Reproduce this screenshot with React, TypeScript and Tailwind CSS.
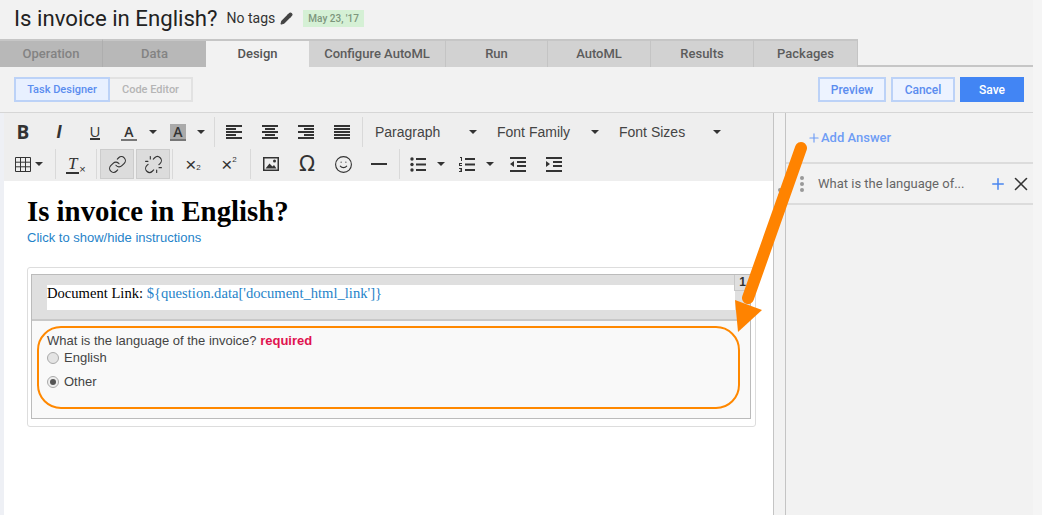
import { Link, Unlink, Smile, Pencil, Plus, X } from "lucide-react";
import type { ReactNode } from "react";

const tabs = [
  { label: "Operation", w: "w-[103px]", cls: "bg-[#b8b8b8] text-[#838383] border-r border-[#aeaeae]" },
  { label: "Data", w: "w-[103px]", cls: "bg-[#b8b8b8] text-[#838383]" },
  { label: "Design", w: "w-[103px]", cls: "bg-[#f2f2f2] text-[#555]" },
  { label: "Configure AutoML", w: "w-[137px]", cls: "bg-[#d2d2d2] text-[#5c5c5c] border-r border-[#c4c4c4]" },
  { label: "Run", w: "w-[102px]", cls: "bg-[#d2d2d2] text-[#5c5c5c] border-r border-[#c4c4c4]" },
  { label: "AutoML", w: "w-[103px]", cls: "bg-[#d2d2d2] text-[#5c5c5c] border-r border-[#c4c4c4]" },
  { label: "Results", w: "w-[103px]", cls: "bg-[#d2d2d2] text-[#5c5c5c] border-r border-[#c4c4c4]" },
  { label: "Packages", w: "w-[104px]", cls: "bg-[#d2d2d2] text-[#5c5c5c] border-r border-[#c4c4c4]" },
];

const Caret = () => (
  <span className="inline-block w-0 h-0 border-x-[4px] border-x-transparent border-t-[4px] border-t-[#333]" />
);

const Sep = () => <div className="w-px h-[30px] bg-[#d9d9d9] mx-[1px] shrink-0" />;

const Btn = ({ w = "w-[36px]", children, active }: { w?: string; children: ReactNode; active?: boolean }) => (
  <div className={`${w} h-[30px] shrink-0 flex items-center justify-center text-[#333] ${active ? "bg-[#dcdcdc] border border-[#ccc]" : ""}`}>
    {children}
  </div>
);

const Lines = ({ rows }: { rows: [number, number][] }) => (
  <svg width="16" height="15" viewBox="0 0 16 15" fill="#333">
    {rows.map(([x, w], i) => (
      <rect key={i} x={x} y={i * 3} width={w} height="2" />
    ))}
  </svg>
);

const Dropdown = ({ label }: { label: string }) => (
  <div className="w-[122px] h-[30px] flex items-center justify-between pr-[20px] text-[14px] text-[#444] shrink-0">
    <span>{label}</span>
    <Caret />
  </div>
);

const Dots = () => (
  <>
    <span className="w-[4px] h-[4px] rounded-full bg-[#999]" />
    <span className="w-[4px] h-[4px] rounded-full bg-[#999]" />
    <span className="w-[4px] h-[4px] rounded-full bg-[#999]" />
  </>
);

function Toolbar() {
  return (
    <div className="h-[68px] bg-[#eeeeee] pl-[1px] pt-[4px] font-['Liberation_Sans',sans-serif]">
      <div className="h-[30px] flex items-center">
        <Btn><b className="text-[19px] font-['Open_Sans',sans-serif] leading-none">B</b></Btn>
        <Btn><i className="text-[18px] font-['Liberation_Sans',sans-serif] leading-none font-bold">I</i></Btn>
        <Btn>
          <span className="text-[15px] leading-[14px] border-b-2 border-[#333] font-['Open_Sans',sans-serif]">U</span>
        </Btn>
        <Btn w="w-[32px]">
          <span className="text-[14px] font-['Open_Sans',sans-serif] leading-[15px] border-b-[2px] border-[#777] w-[16px] text-center font-semibold">A</span>
        </Btn>
        <Btn w="w-[15px]"><Caret /></Btn>
        <Btn>
          <span className="text-[14px] font-['Open_Sans',sans-serif] leading-[15px] bg-[#aaa] border-b-[2px] border-[#777] w-[16px] text-center font-semibold">A</span>
        </Btn>
        <Btn w="w-[10px]"><Caret /></Btn>
        <div className="w-[7px]" />
        <Sep />
        <Btn><Lines rows={[[0, 16], [0, 10], [0, 16], [0, 10], [0, 16]]} /></Btn>
        <Btn><Lines rows={[[0, 16], [3, 10], [0, 16], [3, 10], [0, 16]]} /></Btn>
        <Btn><Lines rows={[[0, 16], [6, 10], [0, 16], [6, 10], [0, 16]]} /></Btn>
        <Btn><Lines rows={[[0, 16], [0, 16], [0, 16], [0, 16], [0, 16]]} /></Btn>
        <div className="w-[1px]" />
        <Sep />
        <div className="w-[11px]" />
        <Dropdown label="Paragraph" />
        <Dropdown label="Font Family" />
        <Dropdown label="Font Sizes" />
      </div>
      <div className="h-[30px] mt-[2px] flex items-center">
        <div className="w-[10px]" />
        <svg width="16" height="15" viewBox="0 0 16 15" fill="none" stroke="#333">
          <path d="M.5.5h15v14H.5zM.5 5.2h15M.5 9.8h15M5.5.5v14M10.5.5v14" />
        </svg>
        <div className="w-[4px]" />
        <Caret />
        <div className="w-[11px]" />
        <Sep />
        <Btn w="w-[38px]">
          <span className="text-[17px] font-['Liberation_Serif',serif] italic leading-[17px] border-b-2 border-[#333] w-[13px] text-center">
            T
          </span>
          <span className="text-[11px] leading-none mt-[10px]">×</span>
        </Btn>
        <Sep />
        <div className="w-[2px]" />
        <Btn w="w-[34px]" active><Link size={19} strokeWidth={1.4} /></Btn>
        <div className="w-[2px]" />
        <Btn w="w-[34px]" active><Unlink size={19} strokeWidth={1.4} /></Btn>
        <div className="w-[1px]" />
        <Sep />
        <Btn w="w-[38px]">
          <span className="text-[19px] leading-none">×</span>
          <span className="text-[8px] mt-[8px] leading-none">2</span>
        </Btn>
        <Btn w="w-[34px]">
          <span className="text-[19px] leading-none">×</span>
          <span className="text-[8px] -mt-[8px] leading-none">2</span>
        </Btn>
        <div className="w-[3px]" />
        <Sep />
        <Btn w="w-[38px]">
          <svg width="16" height="14" viewBox="0 0 16 14">
            <path d="M0 0h16v14H0z" fill="#333" />
            <path d="M1.5 1.5h13v11h-13z" fill="#eee" />
            <path d="M2.5 11.5l4-5 3 3 1.5-1.5 2.5 3.5z" fill="#333" />
            <circle cx="11.5" cy="4" r="1.5" fill="#333" />
          </svg>
        </Btn>
        <Btn w="w-[34px]"><span className="text-[21px] leading-none font-['DejaVu_Sans',sans-serif]">Ω</span></Btn>
        <Btn w="w-[38px]"><Smile size={19} strokeWidth={1.4} /></Btn>
        <Btn w="w-[34px]"><div className="w-[16px] h-[2px] bg-[#333]" /></Btn>
        <div className="w-[2px]" />
        <Sep />
        <Btn w="w-[34px]">
          <svg width="16" height="15" viewBox="0 0 16 15" fill="#333">
            <circle cx="2" cy="2" r="1.7" /><circle cx="2" cy="7.5" r="1.7" /><circle cx="2" cy="13" r="1.7" />
            <path d="M6 1h10v2H6zM6 6.5h10v2H6zM6 12h10v2H6z" />
          </svg>
        </Btn>
        <Btn w="w-[12px]"><Caret /></Btn>
        <Btn w="w-[39px]">
          <svg width="16" height="15" viewBox="0 0 16 15" fill="#333">
            <path d="M1 0h2v4H2V1H1zM0 6h3v1H1v1h2v1H0v-1zM0 11h3v4H0v-1h2v-.5H1v-1h1V12H0z" />
            <path d="M6 1h10v2H6zM6 6.5h10v2H6zM6 12h10v2H6z" />
          </svg>
        </Btn>
        <Btn w="w-[8px]"><Caret /></Btn>
        <div className="w-[6px]" />
        <Btn>
          <svg width="16" height="15" viewBox="0 0 16 15" fill="#333">
            <path d="M0 0h16v2H0zM7 4h9v2H7zM7 8h9v2H7zM0 13h16v2H0zM4 4v6L0 7z" />
          </svg>
        </Btn>
        <Btn>
          <svg width="16" height="15" viewBox="0 0 16 15" fill="#333">
            <path d="M0 0h16v2H0zM7 4h9v2H7zM7 8h9v2H7zM0 13h16v2H0zM0 4v6l4-3z" />
          </svg>
        </Btn>
      </div>
    </div>
  );
}

export default function App() {
  return (
    <div className="relative w-[1042px] h-[515px] overflow-hidden bg-[#f5f5f5] font-['Roboto',sans-serif]">
      <div className="w-[1033px] h-full bg-[#f2f2f2]">
        {/* title */}
        <div className="h-[39px] pl-[14px] pb-[3px] flex items-center gap-[9px]">
          <h1 className="text-[22.2px] text-[#222] leading-none">Is invoice in English?</h1>
          <span className="text-[14px] text-[#333]">No tags</span>
          <Pencil size={13} fill="#444" stroke="#444" className="-ml-[4px]" />
          <span className="ml-[1px] h-[17px] px-[5px] flex items-center bg-[#d5f0d5] text-[#7d967d] text-[10px] font-medium">
            May 23, '17
          </span>
        </div>

        {/* tabs */}
        <div className="h-[28px] flex border-b-2 border-[#c6c6c6]">
          {tabs.map((t) => (
            <div
              key={t.label}
              className={`${t.w} h-[28px] flex items-center justify-center text-[13px] font-medium border-t-2 border-t-[#c6c6c6] ${t.cls}`}
            >
              {t.label}
            </div>
          ))}
        </div>

        {/* action row */}
        <div className="h-[45px] pl-[14px] pr-[9px] flex items-center justify-between">
          <div className="flex text-[11px] font-medium">
            <div className="w-[96px] h-[25px] pt-[1px] flex items-center justify-center bg-[#e8f0ff] border-2 border-[#bcd2f7] text-[#5b8def]">
              Task Designer
            </div>
            <div className="w-[83px] h-[25px] pt-[1px] flex items-center justify-center border-2 border-l-0 border-[#e2e2e2] text-[#b5b5b5]">
              Code Editor
            </div>
          </div>
          <div className="flex gap-[5px] text-[12px] font-medium">
            <div className="w-[68px] h-[25px] flex items-center justify-center bg-[#edf3ff] border-2 border-[#bcd2f7] text-[#5b8def]">
              Preview
            </div>
            <div className="w-[64px] h-[25px] flex items-center justify-center bg-[#edf3ff] border-2 border-[#bcd2f7] text-[#5b8def]">
              Cancel
            </div>
            <div className="w-[64px] h-[25px] flex items-center justify-center bg-[#4285f4] text-white">
              Save
            </div>
          </div>
        </div>

        {/* workspace */}
        <div className="h-[403px] flex border-t border-[#d6d6d6]">
          <div className="w-[4px] bg-[#eef0f5] shrink-0" />
          <div className="w-[769px] shrink-0 bg-white">
            <Toolbar />
            <div className="pl-[23px] pr-[17px] pt-[14px]">
              <h2 className="text-[28.8px] leading-[32px] font-bold text-black font-['Liberation_Serif',serif]">
                Is invoice in English?
              </h2>
              <a className="block mt-[1px] text-[13px] leading-[20px] text-[#1f83c9] font-['Liberation_Sans',sans-serif]">
                Click to show/hide instructions
              </a>
              <div className="mt-[19px] h-[160px] w-[729px] border border-[#dddddd] rounded-[3px] px-[3px] pt-[6px] pb-[6px]">
                <div className="h-[145px] w-[720px] border border-[#bbbbbb] flex flex-col">
                  <div className="relative h-[46px] bg-[#dfdfdf] border-b-2 border-[#c8c8c8] pl-[15px] pt-[10px]">
                    <div className="w-[688px] h-[25px] bg-white text-[14.6px] leading-[16px] font-['Liberation_Serif',serif] text-black">
                      Document Link: <span className="text-[#1f83c9]">{"${question.data['document_html_link']}"}</span>
                    </div>
                    <span className="absolute right-0 top-0 w-[16px] h-[16px] border-l border-b border-[#c8c8c8] text-center text-[12px] leading-[15px] font-bold text-[#333] font-['Liberation_Sans',sans-serif]">
                      1
                    </span>
                  </div>
                  <div className="flex-1 bg-[#f9f9f9] pl-[15px] pt-[12px] text-[13px] leading-[16px] text-[#444] font-['Liberation_Sans',sans-serif]">
                    <div>
                      What is the language of the invoice? <b className="text-[#e0134f]">required</b>
                    </div>
                    <div className="flex items-center gap-[5px] h-[18px]">
                      <span className="w-[12px] h-[12px] rounded-full bg-[#e4e4e4] border border-[#aaa]" />
                      English
                    </div>
                    <div className="flex items-center gap-[5px] mt-[6px] h-[18px]">
                      <span className="w-[12px] h-[12px] rounded-full bg-[#eee] border border-[#aaa] flex items-center justify-center">
                        <span className="w-[6px] h-[6px] rounded-full bg-[#555]" />
                      </span>
                      Other
                    </div>
                  </div>
                </div>
              </div>
            </div>
          </div>
          <div className="w-[13px] shrink-0 border-x border-[#c4c4c4] relative">
            <div className="absolute left-[4px] top-[75px] flex flex-col gap-[2px]">
              <Dots />
            </div>
          </div>
          <div className="flex-1">
            <div className="h-[51px] pl-[21px] pt-[15px] border-b-2 border-[#dcdcdc] text-[13px] font-medium text-[#6f9df5] flex items-start">
              <Plus size={14} className="mt-[3px]" />
              Add Answer
            </div>
            <div className="h-[41px] flex items-center border-b-2 border-[#dcdcdc] pl-[14px]">
              <div className="flex flex-col gap-[2px] w-[18px] shrink-0">
                <Dots />
              </div>
              <span className="text-[13px] text-[#666] w-[171px] shrink-0 mt-[1px]">What is the language of...</span>
              <Plus size={18} strokeWidth={2} className="text-[#4a86f0] shrink-0" />
              <X size={22} strokeWidth={1.7} className="text-[#333] shrink-0 ml-[3px]" />
            </div>
          </div>
        </div>
      </div>

      {/* annotations */}
      <div className="absolute left-[37px] top-[326px] w-[703px] h-[83px] border-2 border-[#ff8800] rounded-[24px]" />
      <svg className="absolute left-[730px] top-[138px]" width="80" height="200" viewBox="730 138 80 200">
        <path d="M801 148 L748 298" stroke="#ff8300" strokeWidth="12" strokeLinecap="round" fill="none" />
        <path d="M735 300 L762 310 L738 332 Z" fill="#ff8300" />
      </svg>
    </div>
  );
}
